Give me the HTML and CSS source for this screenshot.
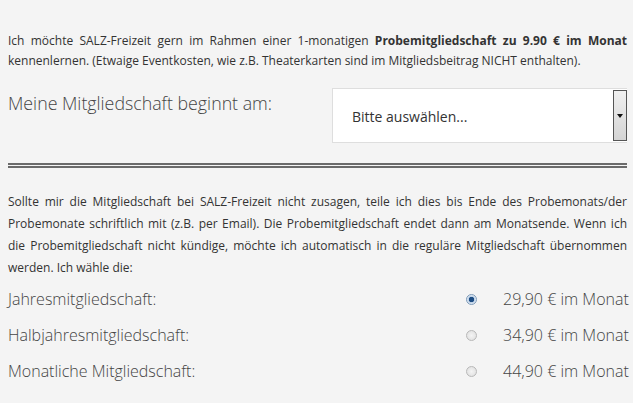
FILE: index.html
```html
<!DOCTYPE html>
<html lang="de">
<head>
<meta charset="utf-8">
<link rel="stylesheet" href="styles.css">
</head>
<body>
<div class="page">
  <p class="intro">Ich möchte SALZ-Freizeit gern im Rahmen einer 1-monatigen <b>Probemitgliedschaft zu 9.90 € im Monat</b> kennenlernen. (Etwaige Eventkosten, wie z.B. Theaterkarten sind im Mitgliedsbeitrag NICHT enthalten).</p>
  <div class="start-row">
    <div class="start-label">Meine Mitgliedschaft beginnt am:</div>
    <div class="select">
      <div class="select-text">Bitte auswählen...</div>
      <div class="select-btn"><span class="arrow"></span></div>
    </div>
  </div>
  <div class="rule"></div>
  <p class="info">Sollte mir die Mitgliedschaft bei SALZ-Freizeit nicht zusagen, teile ich dies bis Ende des Probemonats/der Probemonate schriftlich mit (z.B. per Email). Die Probemitgliedschaft endet dann am Monatsende. Wenn ich die Probemitgliedschaft nicht kündige, möchte ich automatisch in die reguläre Mitgliedschaft übernommen werden. Ich wähle die:</p>
  <div class="options">
    <div class="opt">
      <div class="opt-label">Jahresmitgliedschaft:</div>
      <span class="radio checked"></span>
      <div class="opt-price">29,90 € im Monat</div>
    </div>
    <div class="opt">
      <div class="opt-label">Halbjahresmitgliedschaft:</div>
      <span class="radio"></span>
      <div class="opt-price">34,90 € im Monat</div>
    </div>
    <div class="opt">
      <div class="opt-label">Monatliche Mitgliedschaft:</div>
      <span class="radio"></span>
      <div class="opt-price">44,90 € im Monat</div>
    </div>
  </div>
</div>
</body>
</html>
```

FILE: styles.css
```css
html, body {
  margin: 0;
  padding: 0;
  background: #f4f4f4;
}
body {
  font-family: "Open Sans", "Liberation Sans", sans-serif;
  color: #333;
}
.page {
  padding: 31px 6px 0 8px;
}
.intro {
  margin: 0;
  font-size: 12px;
  line-height: 20px;
  text-align: justify;
  color: #333;
}
.intro b {
  font-weight: 700;
}
.start-row {
  display: flex;
  align-items: flex-start;
  margin-top: 19px;
}
.start-label {
  width: 324px;
  font-size: 17.8px;
  font-weight: 300;
  color: #444;
  line-height: 24px;
  padding-top: 1px;
}
.select {
  flex: 1;
  display: flex;
  height: 53px;
  background: #fff;
  border: 1px solid #dedede;
  border-right: none;
  margin-top: -2px;
}
.select-text {
  flex: 1;
  font-size: 14px;
  color: #333;
  padding-left: 19px;
  padding-top: 2px;
  line-height: 52px;
}
.select-btn {
  width: 12px;
  margin: 1px 0;
  border: 1px solid #555;
  background: linear-gradient(#f0f0f0, #d4d4d4);
  display: flex;
  align-items: center;
  justify-content: center;
}
.arrow {
  width: 0;
  height: 0;
  border-left: 3px solid transparent;
  border-right: 3px solid transparent;
  border-top: 4px solid #111;
}
.rule {
  margin-top: 20px;
  height: 1px;
  border-top: 2px solid #6a6a6a;
  border-bottom: 2px solid #6a6a6a;
}
.info {
  margin: 23px 0 0 0;
  font-size: 12px;
  line-height: 22px;
  text-align: justify;
  color: #333;
}
.options {
  margin-top: 8px;
  display: flex;
  flex-direction: column;
  gap: 12px;
}
.opt {
  display: flex;
  align-items: center;
  height: 24px;
  white-space: nowrap;
}
.opt-label {
  width: 458px;
  flex-shrink: 0;
  font-size: 16px;
  font-weight: 300;
  color: #444;
}
.radio {
  flex-shrink: 0;
  width: 11px;
  height: 11px;
  border-radius: 50%;
  border: 1px solid #b8b8b8;
  background: radial-gradient(#f4f4f4, #dcdcdc);
  box-sizing: border-box;
  margin-right: 26px;
}
.radio.checked {
  border-color: #7d9ab8;
  background: radial-gradient(circle, #1d4d84 0 2.5px, #bcd0e6 3px, #eef3f9 5px);
}
.opt-price {
  font-size: 16px;
  font-weight: 300;
  color: #444;
}
```
